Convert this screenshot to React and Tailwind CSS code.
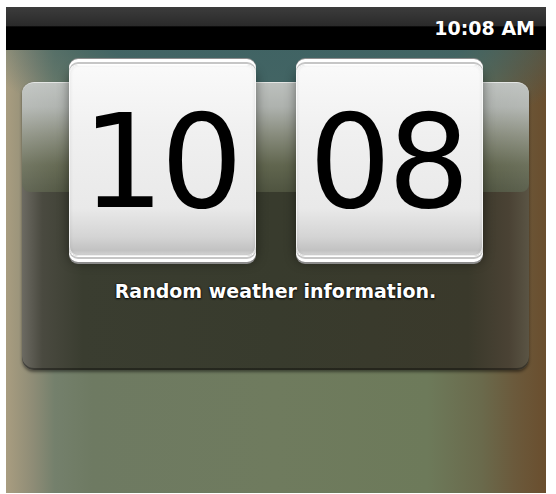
const digitFont = { fontFamily: '"DejaVu Sans", "Liberation Sans", sans-serif' };

const StatusBar = () => (
  <div className="h-[43px] shrink-0 flex items-center justify-end pr-[11px] bg-[linear-gradient(to_bottom,#3c3c3c_0%,#2a2a2a_44%,#000_46%,#000_100%)]">
    <span
      className="text-white text-[19px] font-bold leading-none [text-shadow:0_1px_1px_rgba(0,0,0,0.8)]"
      style={digitFont}
    >
      10:08 AM
    </span>
  </div>
);

const FlipCard = ({ value }) => (
  <div className="w-[187px] h-[191px] rounded-[9px] flex items-center justify-center bg-[linear-gradient(to_bottom,#fafafa_0%,#f0f0f0_35%,#e9e9e9_75%,#d4d4d4_90%,#c2c2c2_97%,#d6d6d6_100%)] shadow-[0_-1px_0_#ffffff,0_-3px_0_#c6c6c6,0_-6px_0_#ffffff,0_-7px_0_#8c8c8c,0_1px_0_#ffffff,0_3px_0_#c6c6c6,0_6px_0_#ffffff,0_8px_0_#8c8c8c,0_6px_12px_rgba(0,0,0,0.45),inset_0_0_0_1px_rgba(255,255,255,0.7),inset_2px_0_3px_rgba(0,0,0,0.06),inset_-2px_0_3px_rgba(0,0,0,0.06)]">
    <span
      className="text-black text-[130px] leading-none tracking-[-4px] -ml-[4px] mt-[3px]"
      style={digitFont}
    >
      {value}
    </span>
  </div>
);

const ClockPanel = () => (
  <div className="w-[507px] h-[288px] rounded-[12px] flex flex-col bg-[linear-gradient(to_right,#6c6a62_0%,#4a4a40_4%,#3a3d30_12%,#383b2d_50%,#3a392b_88%,#4a4234_96%,#5a5444_100%)] shadow-[0_2px_3px_rgba(0,0,0,0.45),inset_0_-2px_0_rgba(0,0,0,0.35)]">
    <div className="h-[110px] shrink-0 rounded-t-[12px] rounded-b-[8px] border-t border-[#e4e6e4] bg-[linear-gradient(to_right,rgba(255,255,255,0.12),rgba(255,255,255,0)_10%,rgba(255,255,255,0)_90%,rgba(255,255,255,0.08)),linear-gradient(to_bottom,#bcc0bd_0%,#aeb2ae_22%,#878b7c_48%,#61664f_75%,#4f5440_100%)]" />
    <div className="relative z-10 -mt-[127px] flex justify-center gap-[40px] pl-[1px]">
      <FlipCard value="10" />
      <FlipCard value="08" />
    </div>
    <p
      className="mt-[23px] text-center text-white text-[19px] font-bold leading-[24px] [text-shadow:0_0_2px_rgba(0,0,0,0.9),0_1px_2px_rgba(0,0,0,0.9)]"
      style={digitFont}
    >
      Random weather information.
    </p>
  </div>
);

export default function App() {
  return (
    <div className="min-h-screen bg-white pt-[7px] pl-[6px]">
      <div className="w-[540px] h-[486px] overflow-hidden flex flex-col bg-[radial-gradient(ellipse_62%_30%_at_52%_0%,rgba(62,98,100,1)_0%,rgba(62,98,100,0.9)_60%,rgba(62,98,100,0)_100%),linear-gradient(to_right,#a99d80_0%,#8e8c76_5%,#74806c_9%,#6e7a62_16%,#6f7b5e_50%,#6d7a5a_78%,#6a6a4c_88%,#6b5a3c_94%,#6a4e2e_100%)]">
        <StatusBar />
        <div className="pl-[16px] pr-[17px] pt-[32px]">
          <ClockPanel />
        </div>
      </div>
    </div>
  );
}
